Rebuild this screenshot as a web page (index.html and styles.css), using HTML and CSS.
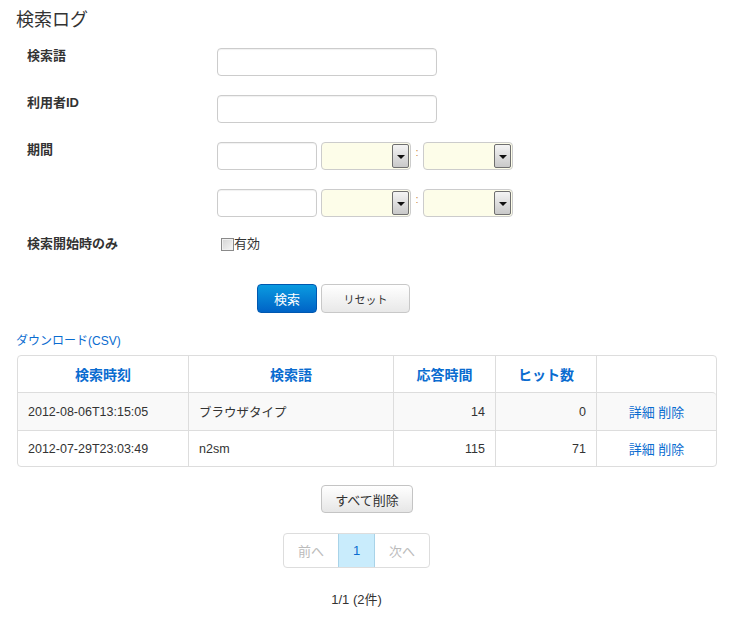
FILE: index.html
```html
<!DOCTYPE html>
<html lang="ja">
<head>
<meta charset="utf-8">
<title>検索ログ</title>
<link rel="stylesheet" href="styles.css">
</head>
<body>
<div class="page">
  <h1 class="title">検索ログ</h1>
  <div class="form">
    <div class="row">
      <div class="label">検索語</div>
      <div class="controls"><span class="input wide"></span></div>
    </div>
    <div class="row">
      <div class="label">利用者ID</div>
      <div class="controls"><span class="input wide"></span></div>
    </div>
    <div class="row">
      <div class="label">期間</div>
      <div class="controls">
        <span class="input date"></span>
        <span class="select"><span class="drop"><span class="arrow"></span></span></span>
        <span class="colon">:</span>
        <span class="select"><span class="drop"><span class="arrow"></span></span></span>
      </div>
    </div>
    <div class="row">
      <div class="label"></div>
      <div class="controls">
        <span class="input date"></span>
        <span class="select"><span class="drop"><span class="arrow"></span></span></span>
        <span class="colon">:</span>
        <span class="select"><span class="drop"><span class="arrow"></span></span></span>
      </div>
    </div>
    <div class="row row-check">
      <div class="label">検索開始時のみ</div>
      <div class="controls check-ctl"><span class="checkbox"></span><span class="check-text">有効</span></div>
    </div>
    <div class="buttons">
      <span class="btn btn-primary">検索</span>
      <span class="btn btn-reset">リセット</span>
    </div>
  </div>
  <a class="download">ダウンロード(CSV)</a>
  <table class="log">
    <colgroup>
      <col class="c1"><col class="c2"><col class="c3"><col class="c4"><col class="c5">
    </colgroup>
    <thead>
      <tr><th>検索時刻</th><th>検索語</th><th>応答時間</th><th>ヒット数</th><th></th></tr>
    </thead>
    <tbody>
      <tr class="odd"><td>2012-08-06T13:15:05</td><td>ブラウザタイプ</td><td class="num">14</td><td class="num">0</td><td class="act"><a>詳細</a> <a>削除</a></td></tr>
      <tr class="even"><td>2012-07-29T23:03:49</td><td>n2sm</td><td class="num">115</td><td class="num">71</td><td class="act"><a>詳細</a> <a>削除</a></td></tr>
    </tbody>
  </table>
  <div class="delall-wrap"><span class="btn btn-delall">すべて削除</span></div>
  <div class="pager-wrap">
    <div class="pager">
      <span class="pg disabled">前へ</span><span class="pg active">1</span><span class="pg disabled">次へ</span>
    </div>
  </div>
  <div class="count">1/1 (2件)</div>
</div>
</body>
</html>
```
FILE: styles.css
```css
* { box-sizing: border-box; }
body {
  margin: 0;
  font-family: "Liberation Sans", "Noto Sans CJK JP", sans-serif;
  font-size: 13px;
  color: #333;
  background: #fff;
}
.page { padding: 8px 20px 0 17px; width: 737px; }
.title {
  margin: 0 0 16px -1px;
  font-size: 18px;
  line-height: 24px;
  font-weight: normal;
  color: #333;
}
.form { padding-left: 10px; }
.row { display: flex; align-items: flex-start; margin-bottom: 19px; }
.label {
  width: 190px;
  font-weight: bold;
  font-size: 13px;
  line-height: 16px;
  color: #333;
}
.controls { display: flex; align-items: center; }
.input {
  display: block;
  height: 28px;
  border: 1px solid #ccc;
  border-radius: 4px;
  background: #fff;
  box-shadow: inset 0 1px 1px rgba(0,0,0,0.06);
}
.wide { width: 220px; }
.date { width: 100px; }
.select {
  position: relative;
  display: block;
  width: 90px;
  height: 28px;
  margin-left: 4px;
  border: 1px solid #ccc;
  border-radius: 4px;
  background: #fdfde9;
}
.drop {
  position: absolute;
  right: 1px;
  top: 1px;
  width: 17px;
  height: 24px;
  border: 1px solid #6f6f6f;
  border-radius: 2px;
  background: linear-gradient(#f4f4f4, #c9c9c9);
}
.arrow {
  position: absolute;
  left: 4px;
  top: 10px;
  width: 0;
  height: 0;
  border-left: 4px solid transparent;
  border-right: 4px solid transparent;
  border-top: 4px solid #111;
}
.colon {
  display: block;
  width: 12px;
  text-align: center;
  color: #c98a4a;
  font-size: 11px;
  line-height: 12px;
  align-self: flex-start;
  margin-top: 4px;
}
.colon + .select { margin-left: 0; }
.row-check { margin-bottom: 32px; }
.check-ctl { height: 16px; padding-left: 4px; }
.checkbox {
  display: block;
  width: 13px;
  height: 13px;
  border: 1px solid #8a8a8a;
  background: linear-gradient(135deg, #d4d4d4, #f6f6f6);
  box-shadow: inset 0 0 0 1px #f0f0f0;
}
.check-text { font-size: 13px; line-height: 16px; color: #333; }
.buttons { display: flex; padding-left: 230px; gap: 4px; }
.btn {
  display: inline-flex;
  align-items: center;
  justify-content: center;
  border-radius: 4px;
  cursor: pointer;
}
.btn-primary {
  width: 60px;
  height: 29px;
  color: #fff;
  font-size: 13px;
  background: linear-gradient(#0a9be0, #0063c6);
  border: 1px solid #0058b0;
}
.btn-reset {
  width: 89px;
  height: 29px;
  color: #333;
  font-size: 11px;
  background: linear-gradient(#fff, #e8e8e8);
  border: 1px solid #c8c8c8;
}
.download {
  display: block;
  margin: 20px 0 6px -1px;
  font-size: 12px;
  line-height: 16px;
  color: #0a6cd0;
}
.log {
  width: 700px;
  table-layout: fixed;
  border-collapse: separate;
  border-spacing: 0;
  border: 1px solid #ddd;
  border-radius: 4px;
  font-size: 12.5px;
}
.c1 { width: 170px; }
.c2 { width: 205px; }
.c3 { width: 102px; }
.c4 { width: 101px; }
.c5 { width: 120px; }
.log th, .log td { border-left: 1px solid #ddd; padding: 0 10px; }
.log th:first-child, .log td:first-child { border-left: none; }
.log td { border-top: 1px solid #ddd; color: #333; }
.log th {
  height: 36px;
  color: #0a6cd0;
  font-size: 14px;
  font-weight: bold;
  text-align: center;
}
.log tr.odd td { background: #f9f9f9; height: 38px; }
.log tr.odd td:last-child { border-top-right-radius: 4px; }
.log tr.even td { height: 36px; }
.log td.num { text-align: right; }
.log td.act { text-align: center; }
.log td.act a { color: #0a6cd0; font-size: 13px; }
.delall-wrap { display: flex; justify-content: center; margin-top: 18px; }
.btn-delall {
  width: 92px;
  height: 28px;
  font-size: 13px;
  color: #333;
  background: linear-gradient(#fff, #e6e6e6);
  border: 1px solid #c4c4c4;
}
.pager-wrap { display: flex; justify-content: center; margin-top: 20px; padding-right: 21px; }
.pager {
  display: flex;
  border: 1px solid #ddd;
  border-radius: 4px;
  overflow: hidden;
}
.pg {
  display: flex;
  align-items: center;
  justify-content: center;
  height: 33px;
  font-size: 13px;
  border-left: 1px solid #ddd;
}
.pg:first-child { border-left: none; width: 54px; }
.pg.active { width: 37px; background: #c9ecfc; color: #0a6cd0; border-left-color: #a9d3e8; border-right: 1px solid #a9d3e8; }
.pg.active + .pg { border-left: none; width: 54px; }
.pg.disabled { color: #bbb; }
.count {
  margin-top: 24px;
  padding-right: 21px;
  text-align: center;
  font-size: 13px;
  line-height: 16px;
  color: #333;
}
```
